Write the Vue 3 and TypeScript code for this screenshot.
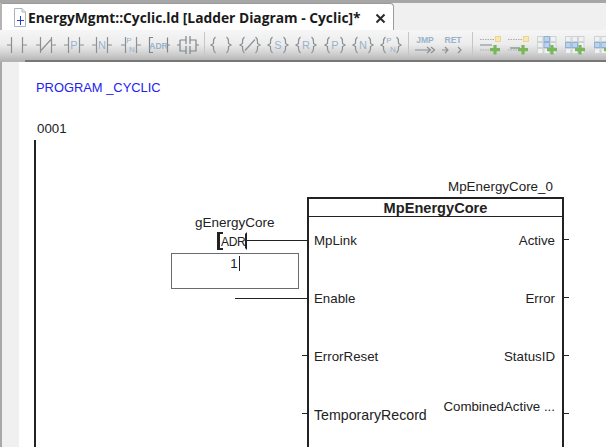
<script setup lang="ts">
type Kind = 'no' | 'nc' | 'p' | 'n' | 'pn' | 'adr' | 'par' | 'coil' | 'ncoil' | 's' | 'r' | 'cp' | 'cn' | 'cpn' | 'jmp' | 'ret' | 'ins1' | 'ins2' | 'ins3' | 'ins4' | 'ins5' | 'sep1' | 'sep2' | 'sep3'
const tools: Kind[] = ['no','nc','p','n','pn','adr','par','sep1','coil','ncoil','s','r','cp','cn','cpn','sep2','jmp','ret','sep3','ins1','ins2','ins3','ins4','ins5']
const isContact = (k: Kind) => ['no','nc','p','n','pn'].includes(k)
const isCoil = (k: Kind) => ['coil','ncoil','s','r','cp','cn','cpn'].includes(k)
const letter = (k: Kind) => ({ p: 'P', n: 'N', s: 'S', r: 'R', cp: 'P', cn: 'N' } as Record<string, string>)[k] ?? ''
const isSep = (k: Kind) => k.startsWith('sep')
const grid = [0, 1, 2, 3, 4, 5, 6, 7, 8]
const isBlue = (k: Kind, i: number) =>
  (k === 'ins3' && (i === 1 || i === 4)) ||
  (k === 'ins4' && (i === 3 || i === 4)) ||
  (k === 'ins5' && (i === 3 || i === 4))
interface Pin { label: string; out: string; inStub?: boolean; long?: boolean }
const rows: Pin[] = [
  { label: 'MpLink', out: 'Active' },
  { label: 'Enable', out: 'Error' },
  { label: 'ErrorReset', out: 'StatusID', inStub: true },
  { label: 'TemporaryRecord', out: 'CombinedActive ...', inStub: true, long: true },
]
</script>

<template>
  <div class="app">
    <div class="tabbar">
      <div class="tab">
        <svg class="doc" width="12" height="19" viewBox="0 0 12 19">
          <path d="M.5.5H8L11.500 4V18.500H.5Z" fill="#fff" stroke="#a9b4c2" />
          <path d="M8 .5V4H11.500" fill="#e4e8ee" stroke="#a9b4c2" />
          <path d="M6.500 8V17M3 12.500H10" stroke="#2a3fd0" fill="none" />
        </svg>
        <span class="tab-title">EnergyMgmt::Cyclic.ld [Ladder Diagram - Cyclic]*</span>
        <svg class="close" width="11" height="11" viewBox="0 0 11 11">
          <path d="M1.500 1.500L9.500 9.500M9.500 1.500L1.500 9.500" stroke="#2b2b2b" stroke-width="2" fill="none" />
        </svg>
      </div>
    </div>

    <div class="toolbar">
      <template v-for="(k, i) in tools" :key="i">
        <span v-if="isSep(k)" class="sep" :class="k"></span>
        <span v-else class="tool">
          <svg width="24" height="20" viewBox="0 0 24 20" class="ico">
            <template v-if="isContact(k)">
              <path d="M2 10H6.500M6.500 2V18M17.500 2V18M17.500 10H22" class="g" />
              <path v-if="k === 'nc'" d="M7 15.500L17 4.500" class="g" />
              <text v-if="letter(k)" x="12" y="14" class="l">{{ letter(k) }}</text>
              <template v-if="k === 'pn'">
                <text x="10" y="8" class="ls">P</text><text x="13" y="17" class="ls">N</text>
              </template>
            </template>
            <template v-else-if="isCoil(k)">
              <path d="M6.500 2Q4.500 3.500 4.500 6.500V8.500L2 10L4.500 11.500V13.500Q4.500 16.500 6.500 18M17.500 2Q19.500 3.500 19.500 6.500V8.500L22 10L19.500 11.500V13.500Q19.500 16.500 17.500 18" class="g" />
              <path v-if="k === 'ncoil'" d="M7 15.500L17 4.500" class="g" />
              <text v-if="letter(k)" x="12" y="14" class="l">{{ letter(k) }}</text>
              <template v-if="k === 'cpn'">
                <text x="10" y="8" class="ls">P</text><text x="14" y="17" class="ls">N</text>
              </template>
            </template>
            <template v-else-if="k === 'adr'">
              <path d="M6 2.500H2.500V17.500H6M20.500 2.500V17.500M20.500 10H23" class="g g2" />
              <text x="11.500" y="13.500" class="la">ADR</text>
            </template>
            <template v-else-if="k === 'par'">
              <path d="M1 10H4M4 5V16H10M10 11V19M14 11V19M14 16H20V5H14M14 1V9M10 1V9M10 5H4M20 10H23" class="g g2" />
            </template>
            <template v-else-if="k === 'jmp'">
              <text x="12" y="7.500" class="la">JMP</text>
              <path d="M2 15H18M14 12L17.500 15L14 18M18 12L21.500 15L18 18" class="g" />
            </template>
            <template v-else-if="k === 'ret'">
              <text x="12" y="7.500" class="la">RET</text>
              <path d="M1 15H6M4 12L7 15L4 18M17 12L20 15L17 18" class="g" />
            </template>
            <template v-else>
              <template v-if="k === 'ins1' || k === 'ins2'">
                <rect x="17.500" y="1.500" width="5" height="5" fill="#f6e8ae" stroke="#e6d596" />
                <path d="M2 4.500H16M2 15H11" stroke="#a8adb0" stroke-dasharray="1.500 1" fill="none" />
                <path v-if="k === 'ins1'" d="M2 10H14" stroke="#b3b8bb" stroke-width="2" fill="none" />
                <path v-else d="M4 13H14" stroke="#a6acaf" stroke-width="2" fill="none" />
              </template>
              <template v-else>
                <rect
                  v-for="c in grid"
                  :key="c"
                  :x="2.500 + (c % 3) * 6.500"
                  :y="1.500 + Math.floor(c / 3) * 6"
                  width="5.500"
                  height="5"
                  class="cell"
                  :class="{ blue: isBlue(k, c) }"
                />
              </template>
              <path d="M17 10V19.500M12 14.700H22" stroke="#7ab65c" stroke-width="3.200" fill="none" />
            </template>
          </svg>
        </span>
      </template>
    </div>

    <div class="body">
      <div class="gutter"></div>
      <div class="canvas">
        <div class="program">PROGRAM _CYCLIC</div>
        <div class="netno">0001</div>
        <div class="rail"></div>

        <div class="instance">MpEnergyCore_0</div>
        <div class="var">gEnergyCore</div>
        <div class="adr"><span class="adr-text">ADR</span></div>
        <div class="wire wire-link"></div>
        <div class="wire wire-enable"></div>
        <div class="editbox"><span class="val">1</span><span class="caret"></span></div>

        <div class="fb">
          <div class="fb-title">MpEnergyCore</div>
          <div class="fb-pins">
            <div v-for="r in rows" :key="r.label" class="pin-row">
              <span v-if="r.inStub" class="stub stub-in"></span>
              <span class="pin-in" :class="{ wide: r.long }">{{ r.label }}</span>
              <span class="pin-out" :class="{ raised: r.long }">{{ r.out }}</span>
              <span class="stub stub-out"></span>
            </div>
          </div>
        </div>
      </div>
    </div>
  </div>
</template>

<style scoped>
.app {
  width: 606px;
  height: 447px;
  overflow: hidden;
  display: flex;
  flex-direction: column;
  background: #fff;
  font-family: "Liberation Sans", Arial, sans-serif;
  font-size: 13.3px;
  color: #222;
}
.tabbar {
  height: 27px;
  flex: none;
  border-top: 3px solid #a6a6a6;
  background: #f0f0f0;
  display: flex;
  align-items: stretch;
}
.tab {
  width: 391px;
  height: 28px;
  background: #fff;
  border: 1px solid #9a9a9a;
  border-left: 2px solid #b4b4b4;
  border-bottom: none;
  border-radius: 0 4px 0 0;
  display: flex;
  align-items: center;
  box-sizing: content-box;
}
.doc { margin-left: 12px; margin-top: -2px; flex: none; }
.tab-title {
  margin-left: 2px;
  margin-top: -1px;
  font-family: "Open Sans", sans-serif;
  font-weight: 700;
  font-size: 13.800px;
  color: #1a1a1a;
  white-space: nowrap;
}
.close { margin-left: 14px; flex: none; }
.toolbar {
  height: 32px;
  flex: none;
  box-sizing: border-box;
  padding: 0 0 2px 3px;
  display: flex;
  align-items: center;
  background:
    linear-gradient(to right, #b4b4b4 25px, #777 25px) bottom / 100% 2px no-repeat,
    linear-gradient(#f6f6f6 0%, #ececec 45%, #d2d2d2 72%, #b0b0b0 100%);
  z-index: 1;
}
.tool {
  width: 28.400px;
  flex: none;
  display: flex;
  justify-content: center;
}
.ico { overflow: visible; }
.g { fill: none; stroke: #8a9094; stroke-width: 1.200; }
.g2 { stroke: #7f868b; }
.l, .ls, .la {
  font-family: "Liberation Sans", sans-serif;
  fill: #98b2cc;
  text-anchor: middle;
}
.l { font-size: 11px; }
.ls { font-size: 8px; }
.la { font-size: 8.500px; font-weight: 700; }
.cell { fill: #f0f1f2; stroke: #cdd2d6; stroke-width: 1; }
.cell.blue { fill: #bcd3ea; stroke: #8fb2d4; }
.sep { width: 1px; height: 26px; background: #c6c6c6; flex: none; }
.sep1 { margin: 0 2px 0 2.200px; }
.sep2 { margin: 0 2px 0 2.200px; }
.sep3 { margin: 0 3px 0 4.200px; }
.body { flex: 1; display: flex; min-height: 0; margin-top: -1px; }
.gutter {
  width: 17px;
  flex: none;
  background: #f0f0f0;
  border-left: 2px solid #a8a8a8;
}
.canvas { flex: 1; position: relative; background: #fff; overflow: hidden; }
.canvas > * { position: absolute; }
/* canvas origin is x=19, y=61 */
.program { left: 17px; top: 19px; color: #2222ee; line-height: 16px; font-size: 12.900px; }
.netno { left: 18px; top: 60px; line-height: 16px; color: #222; }
.rail { left: 15px; top: 79px; width: 2px; bottom: 0; background: #222; }
.instance { left: 429px; top: 118px; line-height: 16px; font-size: 13.400px; }
.var { left: 176px; top: 154px; line-height: 16px; font-size: 13.500px; }
.adr {
  left: 198px;
  top: 171px;
  width: 25px;
  height: 14px;
  border: 2px solid transparent;
  border-left: 3px solid #222;
  border-right-color: #222;
}
.adr::before, .adr::after {
  content: "";
  position: absolute;
  left: -3px;
  width: 6px;
  height: 2px;
  background: #222;
}
.adr::before { top: -2px; }
.adr::after { bottom: -2px; }
.adr-text {
  position: absolute;
  left: 1px;
  top: 0;
  line-height: 16px;
  font-size: 12px;
  letter-spacing: -0.300px;
}
.wire { height: 1px; background: #222; }
.wire-link { left: 228px; width: 60px; top: 179px; }
.wire-enable { left: 216px; width: 72px; top: 237px; }
.editbox {
  left: 152px;
  top: 192px;
  width: 126px;
  height: 34px;
  border: 1px solid #6b6b6b;
  display: flex;
  justify-content: center;
}
.val { line-height: 19px; color: #222; }
.caret { width: 1px; height: 15px; margin: 2px 0 0 1px; background: #222; }
.fb {
  left: 288px;
  top: 136px;
  width: 253px;
  height: 400px;
  border: 2px solid #222;
}
.fb-title {
  height: 17px;
  line-height: 18px;
  text-align: center;
  font-weight: 700;
  border-bottom: 1px solid #222;
  font-size: 14.600px;
}
.fb-pins { padding-top: 9px; }
.pin-row {
  height: 58px;
  position: relative;
  display: flex;
  justify-content: space-between;
  padding: 7px 7px 0 5px;
  box-sizing: border-box;
  line-height: 16px;
}
.pin-in.wide { font-size: 14.200px; }
.pin-out.raised { margin-top: -8px; }
.stub { position: absolute; top: 13px; height: 1px; width: 5px; background: #222; }
.stub-in { left: -7px; }
.stub-out { right: -7px; }
</style>

<style>
html, body { margin: 0; padding: 0; background: #fff; }
</style>
